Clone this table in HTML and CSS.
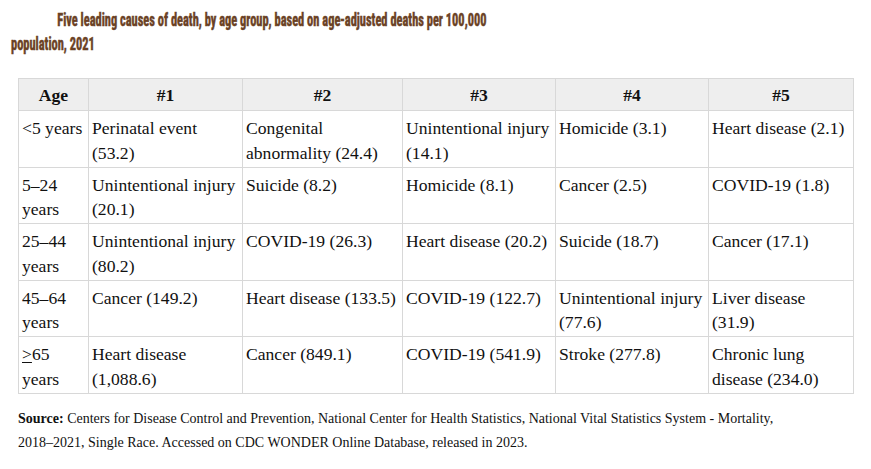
FILE: index.html
```html
<!DOCTYPE html>
<html lang="en">
<head>
<meta charset="utf-8">
<title>Five leading causes of death</title>
<link rel="stylesheet" href="styles.css">
</head>
<body>
<h3 class="title">Five leading causes of death, by age group, based on age-adjusted deaths per 100,000 population, 2021</h3>
<table class="data">
  <colgroup>
    <col class="c-age"><col class="c1"><col class="c2"><col class="c3"><col class="c4"><col class="c5">
  </colgroup>
  <thead>
    <tr><th>Age</th><th>#1</th><th>#2</th><th>#3</th><th>#4</th><th>#5</th></tr>
  </thead>
  <tbody>
    <tr><td>&lt;5 years</td><td>Perinatal event (53.2)</td><td>Congenital abnormality (24.4)</td><td>Unintentional injury (14.1)</td><td>Homicide (3.1)</td><td>Heart disease (2.1)</td></tr>
    <tr><td>5–24 years</td><td>Unintentional injury (20.1)</td><td>Suicide (8.2)</td><td>Homicide (8.1)</td><td>Cancer (2.5)</td><td>COVID-19 (1.8)</td></tr>
    <tr><td>25–44 years</td><td>Unintentional injury (80.2)</td><td>COVID-19 (26.3)</td><td>Heart disease (20.2)</td><td>Suicide (18.7)</td><td>Cancer (17.1)</td></tr>
    <tr><td>45–64 years</td><td>Cancer (149.2)</td><td>Heart disease (133.5)</td><td>COVID-19 (122.7)</td><td>Unintentional injury (77.6)</td><td>Liver disease (31.9)</td></tr>
    <tr><td><span class="ge">&gt;</span>65 years</td><td>Heart disease (1,088.6)</td><td>Cancer (849.1)</td><td>COVID-19 (541.9)</td><td>Stroke (277.8)</td><td>Chronic lung disease (234.0)</td></tr>
  </tbody>
</table>
<p class="source"><b>Source:</b> Centers for Disease Control and Prevention, National Center for Health Statistics, National Vital Statistics System - Mortality, 2018–2021, Single Race. Accessed on CDC WONDER Online Database, released in 2023.</p>
</body>
</html>
```
FILE: styles.css
```css
html, body {
  margin: 0;
  padding: 0;
  background: #fff;
}
body {
  padding: 8px 11px;
  font-family: "Liberation Serif", "Times New Roman", serif;
  color: #111;
}
.title {
  margin: 0;
  width: 730px;
  text-indent: 67px;
  font-family: "Roboto Condensed", "Liberation Sans", sans-serif;
  font-weight: bold;
  font-size: 18px;
  line-height: 24px;
  color: #6a4124;
  -webkit-text-stroke: 0.5px #6a4124;
  transform: scaleX(0.69);
  transform-origin: left top;
}
.data {
  margin: 22px 0 0 7px;
  border-collapse: collapse;
  table-layout: fixed;
  width: 835px;
  font-family: "Liberation Serif", "Times New Roman", serif;
  font-size: 17.6px;
  line-height: 24.25px;
  color: #111;
}
.c-age { width: 70px; }
.c1 { width: 154px; }
.c2 { width: 160px; }
.c3 { width: 153px; }
.c4 { width: 153px; }
.c5 { width: 145px; }
.data th, .data td {
  border: 1px solid #d8d8d8;
  vertical-align: top;
  text-align: left;
}
.data td {
  padding: 5px 3px 2px;
}
.data th {
  padding: 4px 3px 3px;
  background: #eeeeee;
  text-align: center;
  font-weight: bold;
}
.ge { text-decoration: underline; text-underline-offset: 2px; }
.source {
  width: 770px;
  margin: 13px 0 0 7px;
  font-family: "Liberation Serif", "Times New Roman", serif;
  font-size: 14px;
  line-height: 24px;
  color: #111;
}
```
